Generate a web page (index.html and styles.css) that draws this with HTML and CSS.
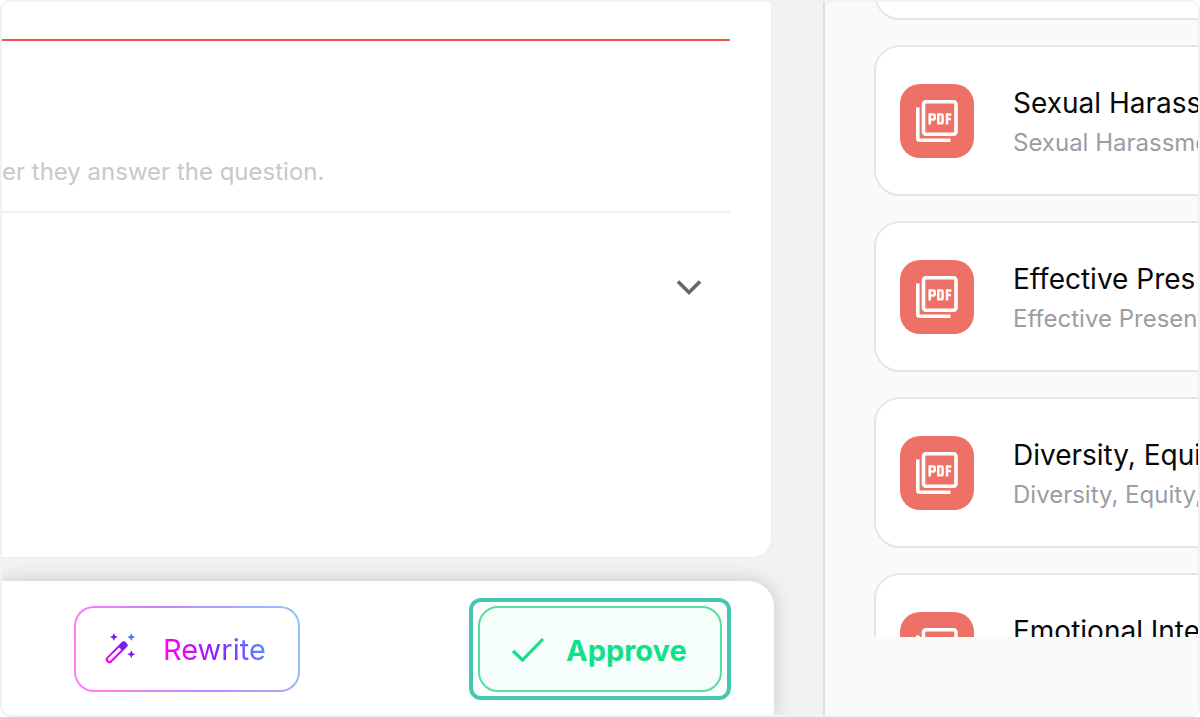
FILE: index.html
```html
<!DOCTYPE html>
<html lang="en">
<head>
<meta charset="utf-8">
<title>Question review</title>
<link rel="stylesheet" href="styles.css">
</head>
<body>
<svg class="sprite" aria-hidden="true">
  <symbol id="pdf" viewBox="0 0 42 42">
    <g fill="none" stroke="#fff">
      <rect x="7.5" y="1.8" width="32.5" height="32.5" rx="2.5" stroke-width="3.6"/>
      <path d="M1.8 7.5V38.2Q1.8 40.2 3.8 40.2H34.5" stroke-width="3.6"/>
      <path d="M13.7 24.5V14.4H17.5Q18.7 14.4 18.7 15.6V18.4Q18.7 19.6 17.5 19.6H13.7M22.3 14.4H25.3Q26.6 14.4 26.6 15.7V21.9Q26.6 23.2 25.3 23.2H22.3ZM31 24.5V14.4H35.4M31 18.9H35" stroke-width="2.5"/>
    </g>
  </symbol>
</svg>
<div class="frame">
  <main class="editor">
    <section class="card">
      <input class="field field-error" type="text" aria-label="Question" aria-invalid="true">
      <input class="field" type="text" aria-label="Feedback" placeholder="er they answer the question.">
      <div class="expander">
        <button class="toggle" type="button" aria-label="Expand">
          <svg width="26" height="18" viewBox="0 0 26 18"><path d="M2 2.5 13 13.5 24 2.5" fill="none" stroke="#686868" stroke-width="3.6"/></svg>
        </button>
      </div>
    </section>
    <footer class="actions">
      <button class="btn rewrite" type="button">
        <svg width="32" height="32" viewBox="0 0 34 34">
          <defs>
            <linearGradient id="wand" x1="2" y1="32" x2="32" y2="2" gradientUnits="userSpaceOnUse">
              <stop offset="0" stop-color="#ff00f0"/>
              <stop offset=".28" stop-color="#e600f5"/>
              <stop offset=".62" stop-color="#7a18fa"/>
              <stop offset="1" stop-color="#3f98ff"/>
            </linearGradient>
          </defs>
          <g fill="url(#wand)">
            <path fill-rule="evenodd" d="M19.2 9.4Q21 7.700 22.800 9.400L24.700 11.300Q26.200 13 24.600 14.700L7.700 31.600Q5.800 33.200 4 31.600L2.300 29.900Q.7 28 2.300 26.200ZM16 15.500 4.400 27.200Q3.700 28 4.400 28.800L5.200 29.500Q6 30.100 6.700 29.400L18.400 17.800Z"/>
            <path d="M10.500 0 11.800 3 14.700 4.300 11.800 5.600 10.500 8.500 9.200 5.600 6.300 4.300 9.200 3ZM29 0 30.300 3 33.300 4.300 30.300 5.600 29 8.500 27.700 5.600 24.700 4.300 27.700 3ZM29 18.300 30.300 21.200 33.300 22.500 30.300 23.800 29 26.700 27.700 23.800 24.700 22.500 27.700 21.200Z"/>
          </g>
        </svg>
        <span class="rewrite-label">Rewrite</span>
      </button>
      <div class="highlight">
        <button class="btn approve" type="button">
          <svg width="34" height="26" viewBox="0 0 34 26"><path d="M2 14 11.500 23 32 2" fill="none" stroke="#10e08a" stroke-width="3.200"/></svg>
          <span>Approve</span>
        </button>
      </div>
    </footer>
  </main>
  <aside class="library">
    <ul class="docs">
      <li class="doc"></li>
      <li class="doc"><span class="badge"><svg width="42" height="42"><use href="#pdf"/></svg></span><div class="doc-text"><h3>Sexual Harass</h3><p>Sexual Harassme</p></div></li>
      <li class="doc"><span class="badge"><svg width="42" height="42"><use href="#pdf"/></svg></span><div class="doc-text"><h3>Effective Pres</h3><p>Effective Present</p></div></li>
      <li class="doc"><span class="badge"><svg width="42" height="42"><use href="#pdf"/></svg></span><div class="doc-text"><h3>Diversity, Equi</h3><p>Diversity, Equity,</p></div></li>
      <li class="doc"><span class="badge"><svg width="42" height="42"><use href="#pdf"/></svg></span><div class="doc-text"><h3>Emotional Inte</h3></div></li>
    </ul>
  </aside>
</div>
</body>
</html>
```
FILE: styles.css
```css
* { box-sizing: border-box; }

body {
  margin: 0;
  background: #fff;
  font-family: Inter, "Liberation Sans", sans-serif;
}

h3, p, ul { margin: 0; padding: 0; font-weight: 400; }

.sprite { position: absolute; width: 0; height: 0; }

.frame {
  display: grid;
  grid-template-columns: 1fr 373px;
  height: 100vh;
  border: 2px solid #f2f1f8;
  border-radius: 10px;
  overflow: hidden;
}

.editor {
  display: flex;
  flex-direction: column;
  gap: 23px;
  min-width: 0;
  padding-right: 49px;
  background: #f2f2f2;
  border-right: 2px solid #dcdcde;
  overflow: hidden;
}

.card {
  flex: 1;
  margin-right: 2px;
  padding-right: 41px;
  background: #fff;
  border: solid #ededf5;
  border-width: 0 1px 1px 0;
  border-radius: 0 0 20px 0;
}

.field {
  display: block;
  width: 100%;
  height: 39px;
  padding: 0;
  border: 0;
  border-bottom: 2px solid #f0f0f0;
  background: none;
  font: 400 24px/32px Inter, "Liberation Sans", sans-serif;
  color: #222;
}

.field + .field { height: 172px; padding: 110px 0 20px; }
.field-error { border-bottom-color: #f2544a; }
.field::placeholder { color: #c8c8c8; opacity: 1; }

.expander {
  display: flex;
  justify-content: flex-end;
  padding: 54px 16px 0 0;
}

.toggle { padding: 12px; border: 0; background: none; }
.toggle svg { display: block; }

.actions {
  display: flex;
  align-items: center;
  justify-content: space-between;
  height: 134px;
  padding: 2px 43px 0 72px;
  background: #fff;
  border-radius: 0 26px 0 0;
  box-shadow: 0 0 20px rgba(0, 0, 0, .18);
}

.btn {
  display: flex;
  align-items: center;
  height: 86px;
  border: 2px solid transparent;
  border-radius: 20px;
  font-family: inherit;
  font-size: 29px;
}

.rewrite {
  gap: 27px;
  width: 226px;
  padding: 0 0 0 28px;
  background:
    linear-gradient(#fff, #fff) padding-box,
    linear-gradient(60deg, #ff7df8 10%, #c485fb 50%, #8fc2ff 95%) border-box;
}

.rewrite-label {
  background: linear-gradient(60deg, #ff00f0 15%, #8c1cff 50%, #4c96ff 95%);
  background-clip: text;
  -webkit-background-clip: text;
  color: transparent;
}

.highlight {
  padding: 4px 5px;
  border: 4px solid #45c8b1;
  border-radius: 12px;
}

.approve {
  gap: 21px;
  width: 244px;
  padding: 2px 0 0 31px;
  border-color: #52e09c;
  background: #f5fefb;
  color: #10e08a;
  font-weight: 700;
}

.library {
  min-width: 0;
  padding: 0 0 78px 49px;
  background: #fafafa;
  overflow: hidden;
}

.docs {
  display: flex;
  flex-direction: column;
  gap: 25px;
  height: 100%;
  list-style: none;
  overflow: hidden;
}

.doc {
  display: flex;
  flex: none;
  align-items: center;
  gap: 39px;
  min-height: 151px;
  margin-right: -40px;
  padding: 0 24px;
  background: #fff;
  border: 2px solid #e6e6e6;
  border-radius: 26px;
  white-space: nowrap;
}

.doc:first-child { margin-top: -133px; }

.doc-text { height: 80px; padding-top: 2px; }
.doc h3 { font-size: 28px; line-height: 40px; color: #080808; }
.doc p { font-size: 24px; line-height: 40px; color: #9a9ea4; }

.badge {
  display: grid;
  flex: none;
  place-items: center;
  width: 74px;
  height: 74px;
  border-radius: 20px;
  background: #ee7167;
}
```
